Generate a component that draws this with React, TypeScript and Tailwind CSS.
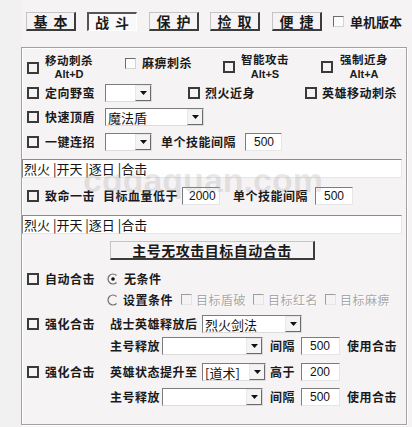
import React from "react";

function Thick() {
  return <span className="block w-[12px] h-[12px] shrink-0 border-2 border-[#3a3a3a]" />;
}

function Thin({ disabled }: { disabled?: boolean }) {
  return disabled ? (
    <span className="block w-[11px] h-[11px] shrink-0 border border-t-[#9c9c9c] border-l-[#9c9c9c] border-r-[#e4e4e4] border-b-[#e4e4e4]" />
  ) : (
    <span className="block w-[11px] h-[11px] shrink-0 border border-t-[#6c6c6c] border-l-[#6c6c6c] border-r-[#d4d4d4] border-b-[#d4d4d4] bg-[#fcfcfc]" />
  );
}

function Radio({ on }: { on?: boolean }) {
  return (
    <svg width="12" height="12" viewBox="0 0 12 12" className="shrink-0">
      <path d="M9.54 2.46 A5 5 0 1 0 9.54 9.54" fill="none" stroke="#6e6e6e" strokeWidth="1.2" />
      {on && <circle cx="6" cy="6" r="1.8" fill="#111" />}
    </svg>
  );
}

function Arrow() {
  return (
    <span className="w-[16px] h-full shrink-0 flex items-center justify-center bg-[#f4f4f4] border-l border-t border-[#e8e8e8] border-r border-r-[#6a6a6a] border-b border-b-[#6a6a6a]">
      <svg width="7" height="4" viewBox="0 0 7 4">
        <path d="M0 0 H7 L3.5 4 Z" fill="#111" />
      </svg>
    </span>
  );
}

function Combo({ className, text }: { className: string; text?: string }) {
  return (
    <div className={"flex h-[18px] shrink-0 bg-white border-t border-l border-[#7c7c7c] border-r border-b border-r-[#dcdcdc] border-b-[#dcdcdc] " + className}>
      <span className="flex-1 flex items-center pl-[2px] text-[13px] leading-none font-normal whitespace-nowrap text-[#111] tracking-normal">{text}</span>
      <Arrow />
    </div>
  );
}

function TBox({ className, v }: { className: string; v: string }) {
  return (
    <div className={"h-[18px] shrink-0 flex items-center bg-white border-t border-l border-[#7c7c7c] border-r border-b border-r-[#e6e6e6] border-b-[#e6e6e6] font-['Liberation_Sans',sans-serif] font-normal text-[12px] leading-none tracking-normal text-[#111] " + className}>
      {v}
    </div>
  );
}

function Wide() {
  return (
    <div className="h-[19px] mr-[4px] flex items-center bg-white border-t border-l border-[#8a8a8a] border-r border-b border-r-[#e6e6e6] border-b-[#e6e6e6] pl-[1px] text-[13px] leading-none font-normal tracking-normal text-[#111] whitespace-nowrap">
      烈火 |开天 |逐日 |合击
    </div>
  );
}

function DisLbl({ t }: { t: string }) {
  return (
    <span className="ml-[4px] w-[57px] shrink-0 text-[12px] font-normal text-[#a8a8a8] [text-shadow:1px_1px_0_#ffffff] whitespace-nowrap">{t}</span>
  );
}

function Tab({ t, pressed }: { t: string; pressed?: boolean }) {
  return pressed ? (
    <div className="w-[50px] h-[19px] shrink-0 flex items-center justify-center bg-[#f9f9f9] border-l-2 border-t-2 border-[#555] border-r border-b border-r-[#ffffff] border-b-[#ffffff] text-[14px] font-bold tracking-[6px] pl-[5px] leading-none whitespace-nowrap">
      {t}
    </div>
  ) : (
    <div className="w-[50px] h-[19px] shrink-0 flex items-center justify-center border-l border-t border-[#c4c4c4] border-r-2 border-b-2 border-r-[#3c3c3c] border-b-[#3c3c3c] text-[14px] font-bold tracking-[6px] pl-[6px] leading-none whitespace-nowrap">
      {t}
    </div>
  );
}

export default function App() {
  return (
    <div className="w-[412px] h-[427px] flex overflow-hidden font-['Noto_Sans_CJK_SC',sans-serif] font-bold text-[#1a1a1a] text-[12px]">
      <div className="w-[21px] shrink-0 bg-[#f1f1f1]" />
      <div className="flex-1 flex flex-col bg-[#f6f3f5] relative">
        {/* tabs */}
        <div className="flex items-center h-[19px] mt-[12px] pl-[5px]">
          <Tab t="基本" />
          <div className="ml-[11px]"><Tab t="战斗" pressed /></div>
          <div className="ml-[12px]"><Tab t="保护" /></div>
          <div className="ml-[11px]"><Tab t="捡取" /></div>
          <div className="ml-[12px]"><Tab t="便捷" /></div>
          <div className="ml-[11px] flex items-center">
            <Thin />
            <span className="ml-[6px] text-[13px] leading-none whitespace-nowrap">单机版本</span>
          </div>
        </div>

        {/* group */}
        <div className="mt-[16px] w-[386px] h-[378px] border border-[#a2a2a2] shadow-[inset_1px_1px_0_#ffffff,1px_1px_0_#ffffff] flex flex-col text-[12px] tracking-[0.5px]">
          {/* row 1 */}
          <div className="mt-[4px] h-[30px] flex pl-[5px]">
            <div className="w-[98px] shrink-0 flex items-start">
              <div className="mt-[10px]"><Thick /></div>
              <div className="ml-[6px] flex flex-col items-center">
                <span className="text-[11.5px] leading-[14px] mt-[1px]">移动刺杀</span>
                <span className="font-['Liberation_Sans',sans-serif] text-[11px] leading-[11px] mt-[2px] tracking-normal">Alt+D</span>
              </div>
            </div>
            <div className="w-[98px] shrink-0 flex items-start">
              <div className="mt-[6px]"><Thin /></div>
              <span className="ml-[6px] mt-[4px] text-[12px] leading-[14px]">麻痹刺杀</span>
            </div>
            <div className="w-[98px] shrink-0 flex items-start">
              <div className="mt-[9px]"><Thick /></div>
              <div className="ml-[6px] flex flex-col items-center">
                <span className="text-[11.5px] leading-[14px]">智能攻击</span>
                <span className="font-['Liberation_Sans',sans-serif] text-[11px] leading-[11px] mt-[3px] tracking-normal">Alt+S</span>
              </div>
            </div>
            <div className="flex items-start">
              <div className="mt-[9px]"><Thick /></div>
              <div className="ml-[7px] flex flex-col items-center">
                <span className="text-[11.5px] leading-[14px]">强制近身</span>
                <span className="font-['Liberation_Sans',sans-serif] text-[11px] leading-[11px] mt-[3px] tracking-normal">Alt+A</span>
              </div>
            </div>
          </div>

          {/* row 2 */}
          <div className="mt-[2px] h-[18px] flex items-center pl-[5px]">
            <Thick />
            <span className="ml-[6px] w-[60px] shrink-0 whitespace-nowrap">定向野蛮</span>
            <Combo className="w-[47px]" />
            <div className="ml-[36px]"><Thick /></div>
            <span className="ml-[5px] w-[100px] shrink-0 whitespace-nowrap">烈火近身</span>
            <Thick />
            <span className="ml-[5px] whitespace-nowrap">英雄移动刺杀</span>
          </div>

          {/* row 3 */}
          <div className="mt-[6px] h-[18px] flex items-center pl-[5px]">
            <Thick />
            <span className="ml-[6px] w-[60px] shrink-0 whitespace-nowrap">快速顶盾</span>
            <Combo className="w-[99px]" text="魔法盾" />
          </div>

          {/* row 4 */}
          <div className="mt-[7px] h-[18px] flex items-center pl-[5px]">
            <Thick />
            <span className="ml-[6px] w-[60px] shrink-0 whitespace-nowrap">一键连招</span>
            <Combo className="w-[47px]" />
            <span className="ml-[9px] w-[84px] shrink-0 whitespace-nowrap">单个技能间隔</span>
            <TBox className="w-[37px] pl-[8px]" v="500" />
          </div>

          {/* row 5 */}
          <div className="mt-[8px]"><Wide /></div>

          {/* row 6 */}
          <div className="mt-[9px] h-[18px] flex items-center pl-[5px]">
            <Thick />
            <span className="ml-[6px] w-[58px] shrink-0 whitespace-nowrap">致命一击</span>
            <span className="w-[79px] shrink-0 whitespace-nowrap">目标血量低于</span>
            <TBox className="w-[38px] pl-[6px]" v="2000" />
            <span className="ml-[13px] w-[82px] shrink-0 whitespace-nowrap">单个技能间隔</span>
            <TBox className="w-[38px] pl-[8px]" v="500" />
          </div>

          {/* row 7 */}
          <div className="mt-[10px]"><Wide /></div>

          {/* row 8 */}
          <div className="mt-[7px] ml-[88px] w-[205px] h-[19px] flex items-center justify-center border-l border-t border-[#c4c4c4] border-r-2 border-b-2 border-r-[#3c3c3c] border-b-[#3c3c3c] text-[14px] leading-none tracking-[0.5px] whitespace-nowrap">
            主号无攻击目标自动合击
          </div>

          {/* row 9 */}
          <div className="mt-[10px] h-[17px] flex items-center pl-[5px]">
            <Thick />
            <span className="ml-[6px] w-[62px] shrink-0 whitespace-nowrap">自动合击</span>
            <Radio on />
            <span className="ml-[5px] whitespace-nowrap">无条件</span>
          </div>

          {/* row 10 */}
          <div className="mt-[4px] h-[17px] flex items-center pl-[85px]">
            <Radio />
            <span className="ml-[4px] w-[58px] shrink-0 whitespace-nowrap">设置条件</span>
            <Thin disabled />
            <DisLbl t="目标盾破" />
            <Thin disabled />
            <DisLbl t="目标红名" />
            <Thin disabled />
            <DisLbl t="目标麻痹" />
          </div>

          {/* row 11 */}
          <div className="mt-[7px] h-[18px] flex items-center pl-[5px]">
            <Thick />
            <span className="ml-[6px] w-[65px] shrink-0 whitespace-nowrap">强化合击</span>
            <span className="w-[92px] shrink-0 whitespace-nowrap">战士英雄释放后</span>
            <Combo className="w-[100px]" text="烈火剑法" />
          </div>

          {/* row 12 */}
          <div className="mt-[4px] h-[18px] flex items-center pl-[88px]">
            <span className="w-[52px] shrink-0 whitespace-nowrap">主号释放</span>
            <Combo className="w-[101px]" />
            <span className="ml-[7px] w-[31px] shrink-0 whitespace-nowrap">间隔</span>
            <TBox className="w-[39px] pl-[8px]" v="500" />
            <span className="ml-[7px] whitespace-nowrap">使用合击</span>
          </div>

          {/* row 13 */}
          <div className="mt-[8px] h-[18px] flex items-center pl-[5px]">
            <Thick />
            <span className="ml-[6px] w-[65px] shrink-0 whitespace-nowrap">强化合击</span>
            <span className="w-[92px] shrink-0 whitespace-nowrap">英雄状态提升至</span>
            <Combo className="w-[64px]" text="[道术]" />
            <span className="ml-[4px] w-[31px] shrink-0 whitespace-nowrap">高于</span>
            <TBox className="w-[39px] pl-[8px]" v="200" />
          </div>

          {/* row 14 */}
          <div className="mt-[7px] h-[18px] flex items-center pl-[88px]">
            <span className="w-[52px] shrink-0 whitespace-nowrap">主号释放</span>
            <Combo className="w-[101px]" />
            <span className="ml-[7px] w-[31px] shrink-0 whitespace-nowrap">间隔</span>
            <TBox className="w-[39px] pl-[8px]" v="500" />
            <span className="ml-[7px] whitespace-nowrap">使用合击</span>
          </div>
        </div>

        {/* watermark */}
        <div className="absolute left-[62px] top-[163px] pointer-events-none font-['Liberation_Sans',sans-serif] font-bold text-[34px] leading-none text-[rgba(150,150,150,0.22)] tracking-normal">
          cqdaquan.com
        </div>
      </div>
    </div>
  );
}
